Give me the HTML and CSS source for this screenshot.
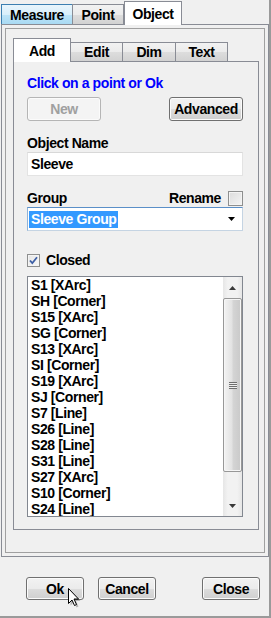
FILE: index.html
```html
<html>
<head>
<title>Object</title>
<link rel="stylesheet" href="styles.css">
</head>
<body>

<div class="window">

	<div class="tabs outer-tabs">
		<span class="tab hot measure">Measure</span>
		<span class="tab point">Point</span>
		<span class="tab active object">Object</span>
	</div>

	<div class="outer-panel">
		<div class="frame">

			<div class="tabs inner-tabs">
				<span class="tab active add">Add</span>
				<span class="tab edit">Edit</span>
				<span class="tab dim">Dim</span>
				<span class="tab text">Text</span>
			</div>

			<div class="page">
				<div class="hint">Click on a point or Ok</div>

				<div class="row actions">
					<button class="btn disabled">New</button>
					<button class="btn">Advanced</button>
				</div>

				<div class="label">Object Name</div>
				<div class="field">Sleeve</div>

				<div class="row group-row">
					<span>Group</span>
					<span class="rename">Rename <span class="check"></span></span>
				</div>
				<div class="combo">
					<span class="selection">Sleeve Group</span>
					<svg class="combo-arrow" width="7" height="4" viewBox="0 0 7 4"><path d="M0 0H7L3.5 4Z" fill="#000"/></svg>
				</div>

				<div class="row closed-row">
					<span class="check checked">
						<svg width="11" height="11" viewBox="0 0 11 11"><path d="M2 5.5L4.3 8.2L9 2.2" fill="none" stroke="#3d5fa6" stroke-width="1.8"/></svg>
					</span>
					<span>Closed</span>
				</div>

				<div class="listbox">
					<ul class="items">
						<li>S1 [XArc]</li>
						<li>SH [Corner]</li>
						<li>S15 [XArc]</li>
						<li>SG [Corner]</li>
						<li>S13 [XArc]</li>
						<li>SI [Corner]</li>
						<li>S19 [XArc]</li>
						<li>SJ [Corner]</li>
						<li>S7 [Line]</li>
						<li>S26 [Line]</li>
						<li>S28 [Line]</li>
						<li>S31 [Line]</li>
						<li>S27 [XArc]</li>
						<li>S10 [Corner]</li>
						<li>S24 [Line]</li>
					</ul>
					<div class="scrollbar">
						<div class="arrow-btn">
							<svg width="7" height="4" viewBox="0 0 7 4"><path d="M3.5 0L7 4H0Z" fill="#3a3a3a"/></svg>
						</div>
						<div class="thumb">
							<span class="grip"></span>
						</div>
						<div class="track"></div>
						<div class="arrow-btn">
							<svg width="7" height="4" viewBox="0 0 7 4"><path d="M0 0H7L3.5 4Z" fill="#3a3a3a"/></svg>
						</div>
					</div>
				</div>
			</div>

		</div>
	</div>

	<div class="footer">
		<button class="btn small">Ok</button>
		<button class="btn small">Cancel</button>
		<button class="btn small close">Close</button>
	</div>

	<svg class="cursor" width="14" height="21" viewBox="0 0 14 21">
		<path d="M2.5 2.5V17.5L6 14L8.5 19.5L10.5 18.5L8 13H12.5Z" fill="#000" opacity="0.25"/>
		<path d="M0.5 0.5V15.5L4 12L6.5 17.5L8.5 16.5L6 11H10.5Z" fill="#fff" stroke="#000" stroke-width="1" stroke-linejoin="miter"/>
	</svg>

</div>

</body>
</html>
```

FILE: styles.css
```css
html, body {
	margin: 0;
	padding: 0;
}

body {
	background-color: #f0f0f0;
	font-family: "Liberation Sans", Arial, sans-serif;
	font-weight: bold;
	font-size: 14px;
	letter-spacing: -0.4px;
	line-height: 16px;
	color: #000;
}

.window {
	position: relative;
	width: 271px;
	height: 618px;
	box-sizing: border-box;
	border-right: 2px solid #9a9a9a;
	border-bottom: 2px solid #9a9a9a;
	background-color: #f0f0f0;
}

/* tabs */

.tabs {
	display: flex;
	align-items: flex-end;
}

.tab {
	box-sizing: border-box;
	display: flex;
	align-items: center;
	justify-content: center;
	border: 1px solid #898c95;
	border-bottom: none;
	background: linear-gradient(#f2f2f2, #ebebeb 50%, #dddddd 51%, #d2d2d2);
}

.tab.hot {
	border-color: #3c7fb1;
	background: linear-gradient(#e9f5fc, #d8effb 50%, #bde4f8 51%, #a9daf3);
}

.tab.active {
	position: relative;
	z-index: 1;
	margin-bottom: -1px;
	background: #fff;
}

.outer-tabs {
	height: 24px;
	padding-left: 1px;
}

.outer-tabs .tab {
	height: 20px;
}

.outer-tabs .tab.active {
	height: 24px;
}

.measure { width: 72px; }
.point { width: 52px; margin-left: -1px; }
.object { width: 58px; margin-left: 0; }

.inner-tabs {
	height: 23px;
	margin-left: 7px;
}

.inner-tabs .tab {
	height: 19px;
}

.inner-tabs .tab.active {
	height: 24px;
}

.add { width: 58px; }
.edit { width: 53px; margin-left: -1px; }
.dim { width: 54px; margin-left: -1px; }
.text { width: 53px; margin-left: -1px; }

/* panels */

.outer-panel {
	box-sizing: border-box;
	width: 268px;
	height: 533px;
	margin-left: 1px;
	border: 1px solid #898c95;
	padding: 3px;
}

.frame {
	box-sizing: border-box;
	height: 100%;
	border: 1px solid #a0a0a0;
	padding-top: 9px;
}

.page {
	box-sizing: border-box;
	width: 246px;
	height: 469px;
	margin-left: 7px;
	border: 1px solid #898c95;
	padding: 13px 15px 0 13px;
}

.hint {
	color: #0000ff;
}

.row {
	display: flex;
	justify-content: space-between;
	align-items: center;
}

.actions {
	margin-top: 6px;
}

.btn {
	box-sizing: border-box;
	width: 74px;
	height: 24px;
	padding: 0;
	font: inherit;
	letter-spacing: inherit;
	color: #000;
	border: 1px solid #707070;
	border-radius: 3px;
	background: linear-gradient(#f2f2f2, #ebebeb 50%, #dddddd 51%, #cfcfcf);
	box-shadow: inset 0 0 0 1px #fbfbfb;
}

.btn.disabled {
	color: #a0a0a0;
	border-color: #b5b5b5;
	background: #f4f4f4;
}

.label {
	margin-top: 14px;
}

.field {
	box-sizing: border-box;
	height: 24px;
	margin-top: 1px;
	padding: 3px 3px 0;
	background-color: #fff;
	border: 1px solid #e3e3e3;
	border-top-color: #d8d8d8;
}

.group-row {
	margin-top: 14px;
	height: 16px;
}

.rename {
	display: flex;
	align-items: center;
}

.check {
	box-sizing: border-box;
	display: inline-block;
	width: 15px;
	height: 15px;
	margin-left: 7px;
	border: 1px solid #8e8f8f;
	background: linear-gradient(135deg, #dcdcdc, #f4f4f4);
	box-shadow: inset 0 0 0 1px #f4f4f4;
}

.combo {
	box-sizing: border-box;
	display: flex;
	align-items: center;
	height: 24px;
	margin-top: 1px;
	padding: 0 7px 0 1px;
	background-color: #fff;
	border: 1px solid #c5d4e3;
	border-top-color: #5a8fc8;
	border-left-color: #8fb3d9;
}

.selection {
	height: 17px;
	padding: 0 2px;
	background-color: #3399ff;
	color: #fff;
}

.combo-arrow {
	margin-left: auto;
}

.closed-row {
	justify-content: flex-start;
	margin-top: 21px;
	height: 16px;
}

.closed-row .check {
	width: 13px;
	height: 13px;
	margin: 0 6px 0 0;
	display: flex;
	align-items: center;
	justify-content: center;
	background: linear-gradient(135deg, #e4e4e4, #fafafa);
}

/* list */

.listbox {
	box-sizing: border-box;
	display: flex;
	height: 241px;
	margin-top: 8px;
	border: 1px solid #828790;
	background-color: #fff;
	overflow: hidden;
}

.items {
	flex-grow: 1;
	margin: 0;
	padding: 0 0 0 3px;
	list-style: none;
}

.scrollbar {
	display: flex;
	flex-direction: column;
	width: 19px;
	background: linear-gradient(to right, #e6e6e6, #f2f2f2 25%, #f2f2f2 75%, #e6e6e6);
}

.arrow-btn {
	height: 21px;
	display: flex;
	align-items: center;
	justify-content: center;
}

.thumb {
	box-sizing: border-box;
	height: 174px;
	display: flex;
	align-items: center;
	justify-content: center;
	border: 1px solid #989898;
	border-radius: 2px;
	background: linear-gradient(to right, #f3f3f3, #e3e3e3 45%, #d4d4d4 55%, #c9c9c9);
	box-shadow: inset 0 0 0 1px #f6f6f6;
}

.grip {
	width: 8px;
	height: 7px;
	background: repeating-linear-gradient(#6f6f6f 0, #6f6f6f 1px, #eeeeee 1px, #eeeeee 2px);
}

.track {
	flex-grow: 1;
}

/* footer */

.footer {
	display: flex;
	padding: 20px 9px 0 26px;
}

.btn.small {
	width: 58px;
	height: 23px;
	margin-right: 14px;
}

.btn.close {
	margin: 0 0 0 auto;
}

.cursor {
	position: absolute;
	left: 68px;
	top: 588px;
}
```
